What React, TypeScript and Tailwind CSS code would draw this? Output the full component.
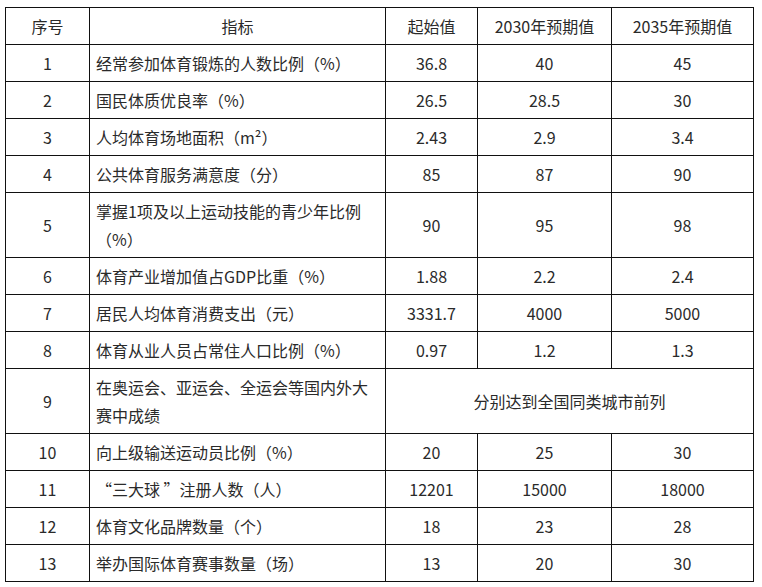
import React from "react";

type Row = {
  no: string;
  name: string;
  start?: string;
  y2030?: string;
  y2035?: string;
  merged?: string;
};

const rows: Row[] = [
  { no: "1", name: "经常参加体育锻炼的人数比例（%）", start: "36.8", y2030: "40", y2035: "45" },
  { no: "2", name: "国民体质优良率（%）", start: "26.5", y2030: "28.5", y2035: "30" },
  { no: "3", name: "人均体育场地面积（m²）", start: "2.43", y2030: "2.9", y2035: "3.4" },
  { no: "4", name: "公共体育服务满意度（分）", start: "85", y2030: "87", y2035: "90" },
  { no: "5", name: "掌握1项及以上运动技能的青少年比例（%）", start: "90", y2030: "95", y2035: "98" },
  { no: "6", name: "体育产业增加值占GDP比重（%）", start: "1.88", y2030: "2.2", y2035: "2.4" },
  { no: "7", name: "居民人均体育消费支出（元）", start: "3331.7", y2030: "4000", y2035: "5000" },
  { no: "8", name: "体育从业人员占常住人口比例（%）", start: "0.97", y2030: "1.2", y2035: "1.3" },
  { no: "9", name: "在奥运会、亚运会、全运会等国内外大赛中成绩", merged: "分别达到全国同类城市前列" },
  { no: "10", name: "向上级输送运动员比例（%）", start: "20", y2030: "25", y2035: "30" },
  { no: "11", name: "“三大球 ”注册人数（人）", start: "12201", y2030: "15000", y2035: "18000" },
  { no: "12", name: "体育文化品牌数量（个）", start: "18", y2030: "23", y2035: "28" },
  { no: "13", name: "举办国际体育赛事数量（场）", start: "13", y2030: "20", y2035: "30" },
];

const cell = "border border-[#111] px-[6px] py-[4px] leading-[28px] align-middle";

export default function App() {
  return (
    <div className="min-h-screen bg-white pl-[5px] pt-[7px] text-[16px] text-[#2a2a2a] font-['Noto_Sans_CJK_SC','Noto_Sans',sans-serif]">
      <table className="table-fixed border-collapse w-[748px]">
        <colgroup>
          <col className="w-[84px]" />
          <col className="w-[296px]" />
          <col className="w-[92px]" />
          <col className="w-[134px]" />
          <col className="w-[142px]" />
        </colgroup>
        <thead>
          <tr>
            <th className={`${cell} font-normal text-center`}>序号</th>
            <th className={`${cell} font-normal text-center`}>指标</th>
            <th className={`${cell} font-normal text-center`}>起始值</th>
            <th className={`${cell} font-normal text-center`}>2030年预期值</th>
            <th className={`${cell} font-normal text-center`}>2035年预期值</th>
          </tr>
        </thead>
        <tbody>
          {rows.map((r) => (
            <tr key={r.no}>
              <td className={`${cell} text-center`}>{r.no}</td>
              <td className={`${cell} text-left`}>{r.name}</td>
              {r.merged ? (
                <td colSpan={3} className={`${cell} text-center`}>
                  {r.merged}
                </td>
              ) : (
                <>
                  <td className={`${cell} text-center`}>{r.start}</td>
                  <td className={`${cell} text-center`}>{r.y2030}</td>
                  <td className={`${cell} text-center`}>{r.y2035}</td>
                </>
              )}
            </tr>
          ))}
        </tbody>
      </table>
    </div>
  );
}
